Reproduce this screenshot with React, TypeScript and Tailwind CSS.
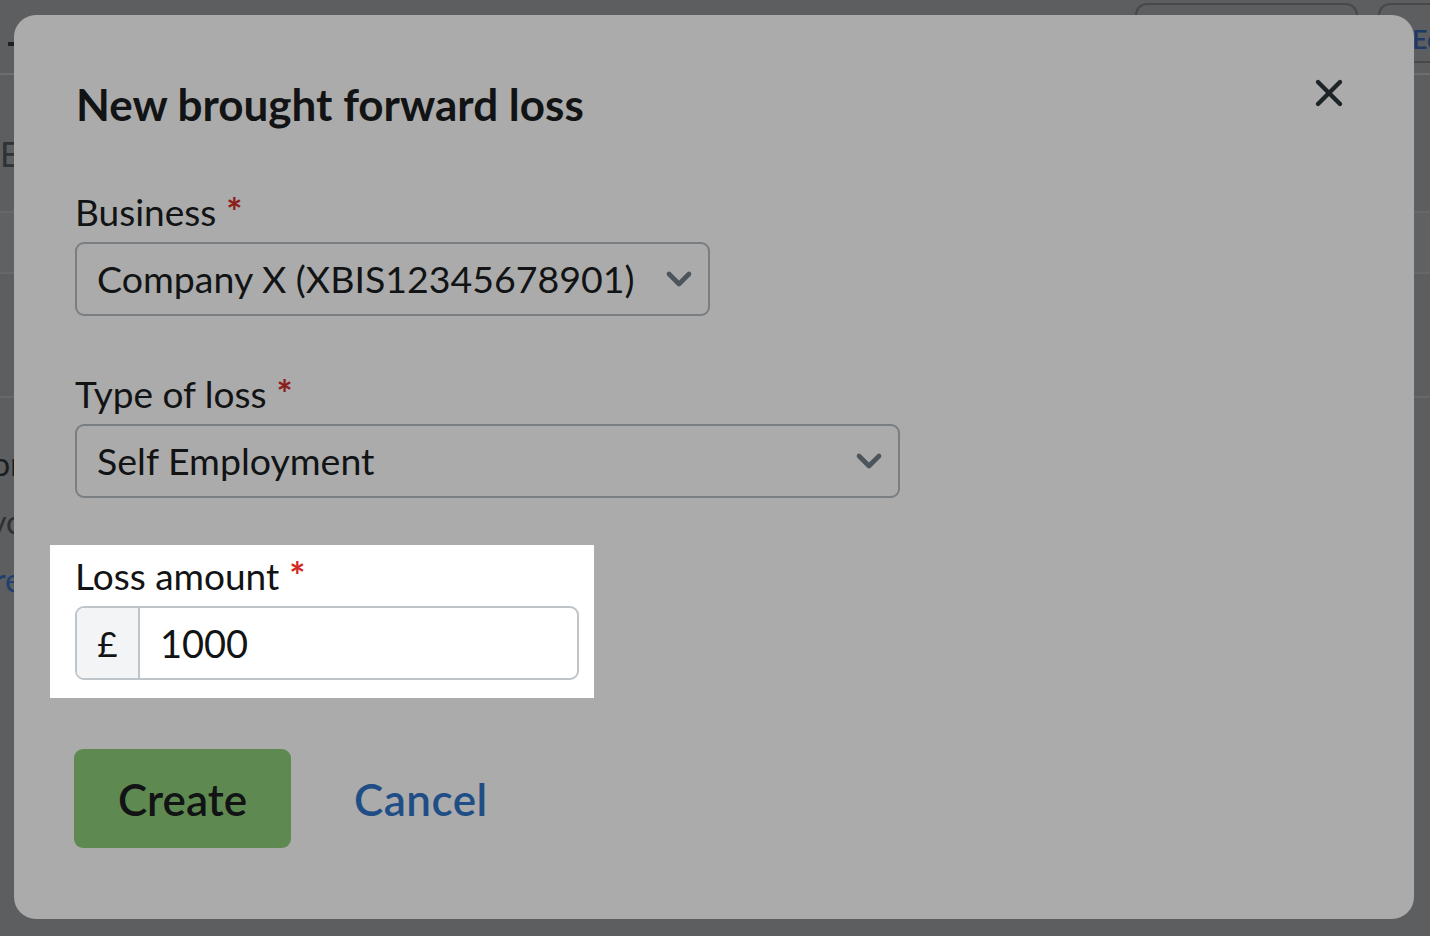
import React from 'react';
import { ChevronDown, X } from 'lucide-react';

const font = { fontFamily: 'Lato, "Noto Sans", sans-serif' };

const Required: React.FC<{ dim?: boolean }> = ({ dim }) => (
  <span className={`ml-[10px] font-bold text-[38px] ${dim ? 'text-[#8c1d1a]' : 'text-[#d22b26]'}`}>*</span>
);

const SelectBox: React.FC<{ value: string; width: string }> = ({ value, width }) => (
  <div
    className={`${width} h-[74px] flex items-center justify-between rounded-[9px] border-2 border-[#7a7e81] pl-[20px] pr-[9px]`}
  >
    <span className="text-[37.5px] text-[#111314]">{value}</span>
    <ChevronDown size={40} strokeWidth={2.8} className="text-[#4b555b]" />
  </div>
);

// page behind the overlay, dimmed
const BackgroundPage: React.FC = () => (
  <div className="w-full h-full flex flex-col bg-[#5c5e60]">
    <div className="h-[75px] flex justify-end items-start border-b-2 border-[#6b6d70]">
      <div className="flex-1 pl-[8px] pt-[42px]">
        <div className="w-[6px] h-[4px] bg-[#1e2022]" />
      </div>
      <div className="mt-[3px] w-[223px] h-[60px] rounded-[12px] border-2 border-[#46484b]" />
      <div className="ml-[20px] mt-[3px] w-[52px] h-[60px] rounded-l-[12px] border-2 border-r-0 border-[#46484b] pl-[32px] pt-[20px] text-[27px] leading-none font-semibold text-[#1e3a66] whitespace-nowrap overflow-hidden">
        Ec
      </div>
    </div>
    <div className="h-[136px] pt-[62px] text-[34px] leading-none text-[#2f3336]">Est</div>
    <div className="h-[63px] border-t-2 border-b-2 border-[#66686b] bg-[#5f6163]" />
    <div className="h-[122px]" />
    <div className="border-t-2 border-[#66686b] pt-[50px] flex flex-col gap-[26px] text-[32px] leading-none whitespace-nowrap">
      <span className="-ml-[8px] text-[#1b1d1f]">or</span>
      <span className="-ml-[10px] text-[#2d3033]">yc</span>
      <span className="-ml-[6px] text-[#1f3f70]">re</span>
    </div>
  </div>
);

export default function App() {
  return (
    <div className="relative w-[1430px] h-[936px] overflow-hidden" style={font}>
      <BackgroundPage />

      <div className="absolute inset-0 pl-[14px] pt-[15px]">
        <div className="w-[1400px] h-[904px] rounded-[22px] bg-[#ababab] flex flex-col">
          <div className="flex items-start justify-between pl-[62px] pr-[63px] pt-[67px]">
            <h1 className="text-[44px] leading-none font-bold text-[#121314]">New brought forward loss</h1>
            <X size={44} strokeWidth={2.4} className="-mt-[11px] text-[#1d2427]" />
          </div>

          <div className="pl-[61px] pt-[66px] flex flex-col">
            <label className="text-[37px] leading-none text-[#121314] mb-[12px]">
              Business<Required dim />
            </label>
            <SelectBox value="Company X (XBIS12345678901)" width="w-[635px]" />

            <label className="mt-[58px] text-[37px] leading-none text-[#121314] mb-[12px]">
              Type of loss<Required dim />
            </label>
            <SelectBox value="Self Employment" width="w-[825px]" />
          </div>

          <div className="ml-[36px] mt-[47px] w-[544px] h-[153px] bg-white pl-[25px] pt-[11px]">
            <label className="block text-[37px] leading-none text-[#121314] mb-[12px]">
              Loss amount<Required />
            </label>
            <div className="w-[504px] h-[74px] flex rounded-[9px] border-2 border-[#bfc4c9] overflow-hidden">
              <div className="w-[63px] bg-[#f3f4f6] border-r-2 border-[#bfc4c9] flex items-center justify-center text-[35px] text-[#111314]">
                £
              </div>
              <div className="flex-1 flex items-center pl-[20px] text-[38px] text-[#111314]">1000</div>
            </div>
          </div>

          <div className="pl-[60px] mt-[51px] flex items-center gap-[63px]">
            <button className="w-[217px] h-[99px] rounded-[9px] bg-[#5e8a52] text-[44px] font-semibold text-[#121314]">
              Create
            </button>
            <button className="text-[44px] font-semibold tracking-[0.5px] text-[#1f4e87]">Cancel</button>
          </div>
        </div>
      </div>
    </div>
  );
}
